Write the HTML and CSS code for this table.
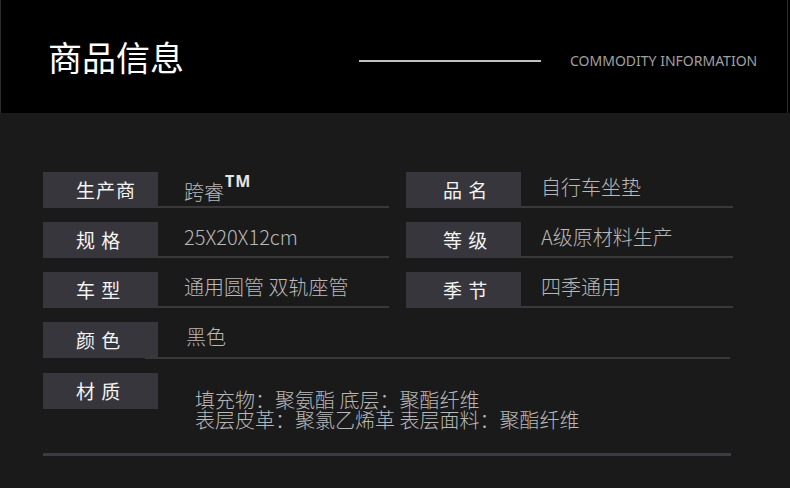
FILE: index.html
```html
<!DOCTYPE html>
<html lang="zh-CN">
<head>
<meta charset="utf-8">
<title>商品信息</title>
<link rel="stylesheet" href="styles.css">
</head>
<body>
<header class="hero">
  <h1 class="hero-title">商品信息</h1>
  <div class="hero-rule"></div>
  <div class="hero-en"><span>COMMODITY INFORMATION</span></div>
</header>
<main class="specs">
  <div class="grid">
    <div class="item item-left">
      <div class="label">生产商</div>
      <div class="value value-brand">跨睿<sup class="tm">TM</sup></div>
    </div>
    <div class="item item-right">
      <div class="label">品 名</div>
      <div class="value">自行车坐垫</div>
    </div>
    <div class="item item-left">
      <div class="label">规 格</div>
      <div class="value">25X20X12cm</div>
    </div>
    <div class="item item-right">
      <div class="label">等 级</div>
      <div class="value">A级原材料生产</div>
    </div>
    <div class="item item-left">
      <div class="label">车 型</div>
      <div class="value">通用圆管 双轨座管</div>
    </div>
    <div class="item item-right">
      <div class="label">季 节</div>
      <div class="value">四季通用</div>
    </div>
  </div>
  <div class="item item-wide">
    <div class="label">颜 色</div>
    <div class="value">黑色</div>
  </div>
  <div class="material">
    <div class="label">材 质</div>
    <div class="material-text">填充物：聚氨酯 底层：聚酯纤维<br>表层皮革：聚氯乙烯革 表层面料：聚酯纤维</div>
  </div>
</main>
</body>
</html>
```

FILE: styles.css
```css
* { box-sizing: border-box; }

html, body {
  margin: 0;
  padding: 0;
}

body {
  width: 790px;
  height: 488px;
  overflow: hidden;
  background: #1b1a1b;
  font-family: "Noto Sans CJK SC", "Noto Sans", sans-serif;
}

.hero {
  height: 113px;
  background: #000;
  border-left: 1px solid #2a2a2a;
  box-shadow: inset -2px 0 0 #000, inset -3px 0 0 #2a2a2a;
  display: flex;
  align-items: flex-start;
  padding-left: 47px;
}

.hero-title {
  margin: 40px 0 0;
  font-size: 34px;
  line-height: 34px;
  font-weight: 400;
  color: #fff;
  width: 136px;
  flex: none;
}

.hero-rule {
  margin: 60px 0 0 175px;
  width: 182px;
  height: 2px;
  background: #c2c2c2;
  flex: none;
}

.hero-en {
  margin: 51px 0 0 29px;
  height: 15px;
  overflow: hidden;
  font-family: "Noto Sans", sans-serif;
  font-size: 14px;
  line-height: 20px;
  color: #a0a0a0;
  white-space: nowrap;
}

.specs {
  padding: 59px 0 0 43px;
  display: flex;
  flex-direction: column;
  row-gap: 14px;
}

.grid {
  display: grid;
  grid-template-columns: 346px 327px;
  column-gap: 17px;
  row-gap: 14px;
}

.item {
  display: flex;
  height: 36px;
}

.label {
  position: relative;
  z-index: 1;
  flex: none;
  width: 115px;
  height: 36px;
  background: #37363d;
  color: #f4f4f4;
  font-size: 19px;
  font-weight: 400;
  line-height: 36px;
  letter-spacing: 1px;
  padding-left: 33px;
  white-space: pre;
}

.item-right .label {
  padding-left: 37px;
}

.value {
  flex: 1;
  border-bottom: 2px solid #393939;
  color: #b8b8b8;
  font-size: 20px;
  font-weight: 300;
  line-height: 24px;
  padding: 3px 0 0 26px;
  white-space: nowrap;
}

.item-right .value {
  padding-left: 20px;
}

.value-brand {
  padding-top: 1px;
}

.tm {
  font-family: "Noto Sans", sans-serif;
  font-size: 16px;
  font-weight: 700;
  color: #e6e6e6;
  letter-spacing: 1px;
  line-height: 16px;
  vertical-align: 13px;
  margin-left: 1px;
}

.item-wide {
  width: 687px;
  height: 37px;
}

.item-wide .value {
  margin-left: -13px;
  padding-left: 41px;
  height: 37px;
}

.material {
  display: flex;
  align-items: flex-start;
  width: 688px;
  height: 83px;
  border-bottom: 3px solid #3c3b41;
}

.material-text {
  padding: 17px 0 0 37px;
  color: #b8b8b8;
  font-size: 20px;
  font-weight: 300;
  line-height: 20px;
  white-space: nowrap;
}
```
